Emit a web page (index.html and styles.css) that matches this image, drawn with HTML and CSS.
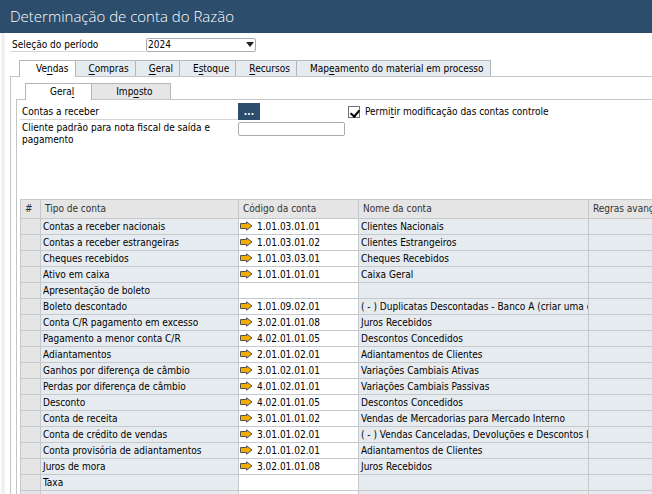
FILE: index.html
```html
<!DOCTYPE html>
<html lang="pt-BR">
<head>
<meta charset="utf-8">
<title>Determinação de conta do Razão</title>
<link rel="stylesheet" href="styles.css">
</head>
<body>
<svg class="defs" aria-hidden="true">
  <symbol id="arrow" viewBox="0 0 13 10">
    <path d="M.5 2.5H6.5V.8L12 5L6.5 9.2V7.5H.5Z" fill="#f5ab00" stroke="#55504a" stroke-width="1"/>
  </symbol>
</svg>
<header class="titlebar"><h1>Determinação de conta do Razão</h1></header>
<main class="window">
  <div class="period">
    <label class="period-label" for="period">Seleção do período</label>
    <div class="select">
      <select id="period"><option>2024</option></select>
      <svg class="caret" viewBox="0 0 8 5" aria-hidden="true"><path d="M0 0H8L4 5Z" fill="#222"/></svg>
    </div>
  </div>
  <nav class="tabs main-tabs">
    <button class="tab active">Ve<u>n</u>das</button>
    <button class="tab"><u>C</u>ompras</button>
    <button class="tab"><u>G</u>eral</button>
    <button class="tab">E<u>s</u>toque</button>
    <button class="tab"><u>R</u>ecursos</button>
    <button class="tab">Map<u>e</u>amento do material em processo</button>
  </nav>
  <section class="panel">
    <nav class="tabs sub-tabs">
      <button class="tab active">Gera<u>l</u></button>
      <button class="tab">Imp<u>o</u>sto</button>
    </nav>
    <section class="subpanel">
      <div class="form">
        <div class="fields">
          <label class="field-label lined" for="more">Contas a receber</label>
          <button class="more" id="more">...</button>
          <label class="field-label" for="customer">Cliente padrão para nota fiscal de saída e pagamento</label>
          <input class="customer" id="customer" type="text">
        </div>
        <label class="check"><input type="checkbox" checked><span>Permi<u>t</u>ir modificação das contas controle</span></label>
      </div>
      <table class="grid">
        <colgroup><col class="c-num"><col class="c-type"><col class="c-code"><col class="c-name"><col></colgroup>
        <thead><tr><th>#</th><th>Tipo de conta</th><th>Código da conta</th><th>Nome da conta</th><th>Regras avançadas</th></tr></thead>
        <tbody>
          <tr><td></td><td>Contas a receber nacionais</td><td><svg class="arrow"><use href="#arrow"/></svg>1.01.03.01.01</td><td>Clientes Nacionais</td><td></td></tr>
          <tr><td></td><td>Contas a receber estrangeiras</td><td><svg class="arrow"><use href="#arrow"/></svg>1.01.03.01.02</td><td>Clientes Estrangeiros</td><td></td></tr>
          <tr><td></td><td>Cheques recebidos</td><td><svg class="arrow"><use href="#arrow"/></svg>1.01.03.03.01</td><td>Cheques Recebidos</td><td></td></tr>
          <tr><td></td><td>Ativo em caixa</td><td><svg class="arrow"><use href="#arrow"/></svg>1.01.01.01.01</td><td>Caixa Geral</td><td></td></tr>
          <tr><td></td><td>Apresentação de boleto</td><td></td><td></td><td></td></tr>
          <tr><td></td><td>Boleto descontado</td><td><svg class="arrow"><use href="#arrow"/></svg>1.01.09.02.01</td><td>( - ) Duplicatas Descontadas - Banco A (criar uma conta</td><td></td></tr>
          <tr><td></td><td>Conta C/R pagamento em excesso</td><td><svg class="arrow"><use href="#arrow"/></svg>3.02.01.01.08</td><td>Juros Recebidos</td><td></td></tr>
          <tr><td></td><td>Pagamento a menor conta C/R</td><td><svg class="arrow"><use href="#arrow"/></svg>4.02.01.01.05</td><td>Descontos Concedidos</td><td></td></tr>
          <tr><td></td><td>Adiantamentos</td><td><svg class="arrow"><use href="#arrow"/></svg>2.01.01.02.01</td><td>Adiantamentos de Clientes</td><td></td></tr>
          <tr><td></td><td>Ganhos por diferença de câmbio</td><td><svg class="arrow"><use href="#arrow"/></svg>3.01.02.01.01</td><td>Variações Cambiais Ativas</td><td></td></tr>
          <tr><td></td><td>Perdas por diferença de câmbio</td><td><svg class="arrow"><use href="#arrow"/></svg>4.01.02.01.01</td><td>Variações Cambiais Passivas</td><td></td></tr>
          <tr><td></td><td>Desconto</td><td><svg class="arrow"><use href="#arrow"/></svg>4.02.01.01.05</td><td>Descontos Concedidos</td><td></td></tr>
          <tr><td></td><td>Conta de receita</td><td><svg class="arrow"><use href="#arrow"/></svg>3.01.01.01.02</td><td>Vendas de Mercadorias para Mercado Interno</td><td></td></tr>
          <tr><td></td><td>Conta de crédito de vendas</td><td><svg class="arrow"><use href="#arrow"/></svg>3.01.01.02.01</td><td>( - ) Vendas Canceladas, Devoluções e Descontos Incondicionais</td><td></td></tr>
          <tr><td></td><td>Conta provisória de adiantamentos</td><td><svg class="arrow"><use href="#arrow"/></svg>2.01.01.02.01</td><td>Adiantamentos de Clientes</td><td></td></tr>
          <tr><td></td><td>Juros de mora</td><td><svg class="arrow"><use href="#arrow"/></svg>3.02.01.01.08</td><td>Juros Recebidos</td><td></td></tr>
          <tr><td></td><td>Taxa</td><td></td><td></td><td></td></tr>
          <tr><td></td><td></td><td></td><td></td><td></td></tr>
        </tbody>
      </table>
    </section>
  </section>
</main>
</body>
</html>
```

FILE: styles.css
```css
* { box-sizing: border-box; }

body {
  margin: 0;
  height: 100vh;
  overflow: hidden;
  display: flex;
  flex-direction: column;
  background: #fff;
  color: #000;
  font: 10px/12px "DejaVu Sans Condensed", "DejaVu Sans", sans-serif;
}

button, input, select { font: inherit; color: inherit; border-radius: 0; }

u { text-decoration: underline; text-underline-offset: 2px; }

.defs { display: none; }

.titlebar {
  flex: none;
  height: 33px;
  padding: 0 10px 2px;
  display: flex;
  align-items: center;
  background: #2c4d6c;
}

h1 {
  margin: 0;
  color: #fff;
  font: 300 15px/20px "Open Sans", "Noto Sans", sans-serif;
}

.window {
  flex: 1;
  min-height: 0;
  margin-left: 1px;
  padding: 5px 0 0 5px;
  border-left: 4px solid #f1f1f1;
}

.period { display: flex; height: 14px; }

.period-label {
  width: 136px;
  padding: 1px 2px 0;
  border-bottom: 1px solid #d6d6d6;
}

.select { position: relative; width: 110px; }

.select select {
  display: block;
  width: 100%;
  height: 14px;
  padding: 0 1px;
  appearance: none;
  border: 1px solid #a9adb0;
  border-radius: 2px;
  background: #fff;
}

.caret {
  position: absolute;
  top: 4px;
  right: 2px;
  width: 8px;
  height: 5px;
  pointer-events: none;
}

.tabs { display: flex; }

.tab {
  height: 17px;
  margin: 0 0 -1px;
  padding: 0 6px 0 13px;
  border: 1px solid #b4b7b9;
  border-left: 0;
  border-bottom-color: #c3c5c7;
  background: #e6ebef;
  white-space: nowrap;
}

.tab:first-child { padding-left: 16px; border-left: 1px solid #b4b7b9; }
.tab.active { position: relative; border-bottom: 0; background: #fff; }

.main-tabs { margin: 8px 0 0 9px; }
.sub-tabs { margin-left: 9px; }

.sub-tabs .tab { padding: 0 17px 0 24px; background: #e6e6e6; }
.sub-tabs .tab.active { background: #fff; }

.panel {
  padding: 6px 0 0 5px;
  border: solid #c3c5c7;
  border-width: 1px 0 0 1px;
}

.subpanel {
  padding: 3px 0 0 3px;
  border: solid #c3c5c7;
  border-width: 1px 0 0 1px;
}

.form { display: flex; gap: 3px; height: 96px; }

.fields {
  display: grid;
  grid-template-columns: 218px 107px;
  grid-template-rows: 17px 24px;
  row-gap: 2px;
}

.field-label { padding: 0 2px; }
.field-label.lined { padding-top: 3px; border-bottom: 1px solid #d6d6d6; }

.more {
  width: 22px;
  height: 17px;
  padding: 0;
  border: 0;
  background: #2c4d6c;
  color: #fff;
  font-weight: bold;
}

.customer {
  width: 107px;
  height: 14px;
  padding: 0 2px;
  border: 1px solid #a9adb0;
  border-radius: 2px;
}

.check { display: flex; gap: 5px; height: 17px; align-items: center; }

.check input {
  position: relative;
  width: 12px;
  height: 12px;
  margin: 0;
  appearance: none;
  border: 1px solid #6f7377;
  background: #fff;
}

.check input:checked::after {
  content: "";
  position: absolute;
  left: 3px;
  top: 1px;
  width: 4px;
  height: 7px;
  border: solid #000;
  border-width: 0 2px 2px 0;
  transform: rotate(40deg);
}

.grid {
  width: 100%;
  table-layout: fixed;
  border-collapse: separate;
  border-spacing: 0;
  border: solid #c6c9cb;
  border-width: 1px 0 0 1px;
}

.c-num { width: 20px; }
.c-type { width: 198px; }
.c-code { width: 120px; }
.c-name { width: 230px; }

th, td {
  height: 16px;
  padding: 0 2px;
  overflow: hidden;
  border: solid #c6c9cb;
  border-width: 0 1px 1px 0;
  background: #e6ebef;
  text-align: left;
  white-space: nowrap;
}

th {
  height: 19px;
  padding: 0 4px;
  background: #e5e5e5;
  color: #333;
  font-weight: 400;
}

td:first-child { background: #e5e5e5; }
td:nth-child(3) { background: #fff; }
th:last-child, td:last-child { border-right: 0; }

.arrow {
  width: 13px;
  height: 10px;
  margin: 0 4px 0 -1px;
  vertical-align: -1px;
}
```
